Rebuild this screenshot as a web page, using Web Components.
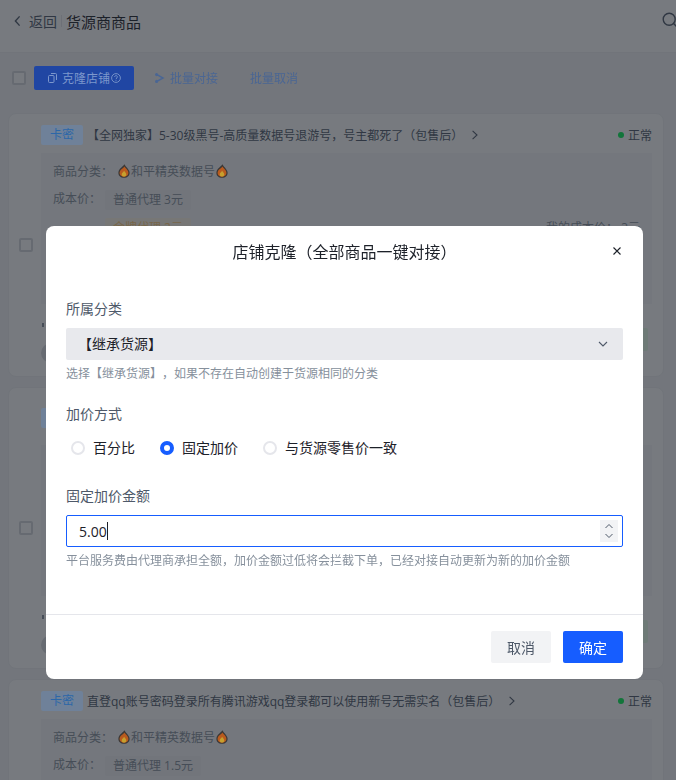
<!DOCTYPE html>
<html lang="zh-CN">
<head>
<meta charset="utf-8">
<title>货源商商品</title>
<style>
    html, body {
        margin: 0;
        height: 780px;
        overflow: hidden;
    }
    body {
        font-family: "Open Sans", "Noto Sans CJK SC", sans-serif;
        font-size: 12px;
        text-spacing-trim: space-all;
        color: #1d2129;
        background: #f4f5f7;
    }
    .page {
        width: 676px;
        height: 780px;
        overflow: hidden;
    }
</style>
</head>
<body>
<div class="page">
    <page-header back="返回" title="货源商商品"></page-header>
    <page-toolbar></page-toolbar>
    <goods-list>
        <goods-card kind="卡密" status="正常" name="【全网独家】5-30级黑号-高质量数据号退游号，号主都死了（包售后）" category="和平精英数据号" cost="普通代理 3元" second="金牌代理 2元" mine="我的成本价： 3元"></goods-card>
        <goods-card tall></goods-card>
        <goods-card kind="卡密" status="正常" name="直登qq账号密码登录所有腾讯游戏qq登录都可以使用新号无需实名（包售后）" category="和平精英数据号" cost="普通代理 1.5元"></goods-card>
    </goods-list>
</div>

<clone-dialog>
    <form-field label="所属分类" hint="选择【继承货源】，如果不存在自动创建于货源相同的分类">
        <select-box value="【继承货源】"></select-box>
    </form-field>
    <form-field label="加价方式">
        <radio-row>
            <radio-option label="百分比"></radio-option>
            <radio-option label="固定加价" checked></radio-option>
            <radio-option label="与货源零售价一致"></radio-option>
        </radio-row>
    </form-field>
    <form-field label="固定加价金额" hint="平台服务费由代理商承担全额，加价金额过低将会拦截下单，已经对接自动更新为新的加价金额">
        <number-box value="5.00"></number-box>
    </form-field>
</clone-dialog>

<script>
// the flames keep their colour through the mask, so they sit above it
const flame = `
    <svg class="flame" width="12" height="14" viewBox="0 0 12 14">
        <path d="M6.4 0.3C7 1.8 8.6 3 9.8 4.8C11 6.4 11.7 7.8 11.6 9.2C11.4 12 9 13.8 6 13.8C3 13.8 0.6 12 0.4 9.2C0.3 7.6 1 6 2 4.8C3.4 3.2 5.4 2.2 6.4 0.3Z" fill="#3b3836"/>
        <path d="M6.4 2.4C7 3.4 8.2 4.4 9 5.6C9.9 6.9 10.5 8 10.4 9.3C10.2 11.4 8.4 12.8 6 12.8C3.6 12.8 1.8 11.4 1.6 9.3C1.5 8 2 6.8 2.9 5.7C3.9 4.6 5.6 3.8 6.4 2.4Z" fill="#b85a1e"/>
        <path d="M6.1 6.8C6.6 8 8.3 8.8 8.3 10.4C8.3 11.7 7.3 12.6 6 12.6C4.7 12.6 3.7 11.7 3.7 10.4C3.7 8.9 5.5 8.2 6.1 6.8Z" fill="#c6a02e"/>
    </svg>`;

class PageHeader extends HTMLElement {
    connectedCallback() {
        this.attachShadow({ mode: 'open' });
        this.shadowRoot.innerHTML = `
            <style>
                :host {
                    display: flex;
                    align-items: center;
                    height: 53px;
                    box-sizing: border-box;
                    padding: 0 0 10px 13px;
                    background: #fff;
                    border-bottom: 1px solid #f0f1f3;
                    font-size: 14px;
                    color: #4e5969;
                }
                .back {
                    display: block;
                    margin-right: 6px;
                }
                .line {
                    width: 1px;
                    height: 12px;
                    margin: 0 4px;
                    background: #e5e6eb;
                }
                .title {
                    font-size: 15px;
                    color: #1d2129;
                }
                .search {
                    margin: 0 -2px 2px auto;
                }
            </style>
            <svg class="back" width="10" height="12" viewBox="0 0 10 12" fill="none" stroke="#4e5969" stroke-width="1.4"><path d="M6.6 1.4L2.4 6L6.6 10.6"/></svg>
            <span>${this.getAttribute('back')}</span>
            <span class="line"></span>
            <span class="title">${this.getAttribute('title')}</span>
            <svg class="search" width="16" height="16" viewBox="0 0 16 16" fill="none" stroke="#4e5969" stroke-width="1.4"><circle cx="7.2" cy="7.2" r="6"/><path d="M11.6 11.6L15 15"/></svg>
        `;
    }
}

class PageToolbar extends HTMLElement {
    connectedCallback() {
        this.attachShadow({ mode: 'open' });
        this.shadowRoot.innerHTML = `
            <style>
                :host {
                    display: flex;
                    align-items: center;
                    height: 24px;
                    padding: 13px 0 23px 12px;
                    font-size: 12px;
                }
                .check {
                    width: 14px;
                    height: 14px;
                    box-sizing: border-box;
                    border: 2px solid #d5d8dd;
                    border-radius: 2px;
                    background: #fff;
                    margin-right: 8px;
                }
                .clone {
                    position: relative;
                    z-index: 1001;
                    display: flex;
                    align-items: center;
                    width: 100px;
                    height: 24px;
                    box-sizing: border-box;
                    padding-left: 14px;
                    border-radius: 2px;
                    background: #2046a3;
                    color: #7c97cc;
                }
                .clone svg:first-child {
                    margin-right: 5px;
                }
                .clone svg:last-child {
                    margin-left: 1px;
                }
                .plain {
                    position: relative;
                    z-index: 1001;
                    display: flex;
                    align-items: center;
                    color: #4a6694;
                }
                .join {
                    margin-left: 21px;
                }
                .join svg {
                    margin-right: 5px;
                }
                .cancel {
                    margin-left: 32px;
                }
            </style>
            <span class="check"></span>
            <span class="clone">
                <svg width="9" height="10" viewBox="0 0 9 10" fill="none" stroke="#7c97cc" stroke-width="1"><rect x="0.5" y="2.5" width="5.5" height="7" rx="1"/><path d="M3 0.5H7.5A1 1 0 0 1 8.5 1.5V7"/></svg>
                <span>克隆店铺</span>
                <svg width="10" height="10" viewBox="0 0 10 10" fill="none" stroke="#7c97cc" stroke-width="0.9"><circle cx="5" cy="5" r="4.4"/><path d="M3.6 4C3.6 2.2 6.4 2.2 6.4 3.9C6.4 5 5 5 5 6.2M5 7V7.8"/></svg>
            </span>
            <span class="plain join">
                <svg width="10" height="10" viewBox="0 0 10 10" fill="none" stroke="#4a6694" stroke-width="1.5"><path d="M2 1.6L8 5L2 8.4"/><circle cx="1.6" cy="1.6" r="0.8" fill="#4a6694"/><circle cx="1.6" cy="8.4" r="0.8" fill="#4a6694"/></svg>
                <span>批量对接</span>
            </span>
            <span class="plain cancel">批量取消</span>
        `;
    }
}

class GoodsList extends HTMLElement {
    connectedCallback() {
        this.attachShadow({ mode: 'open' });
        this.shadowRoot.innerHTML = `
            <style>
                :host {
                    display: flex;
                    flex-direction: column;
                    gap: 10px;
                    padding: 0 12px 0 8px;
                }
            </style>
            <slot></slot>
        `;
    }
}

class GoodsCard extends HTMLElement {
    connectedCallback() {
        this.attachShadow({ mode: 'open' });
        const name = this.getAttribute('name');
        const kind = this.getAttribute('kind') || '';
        const status = this.getAttribute('status');
        const category = this.getAttribute('category');
        const cost = this.getAttribute('cost');
        const second = this.getAttribute('second');
        const mine = this.getAttribute('mine');
        const tall = this.hasAttribute('tall');

        this.shadowRoot.innerHTML = `
            <style>
                :host {
                    display: flex;
                    align-items: center;
                    gap: 8px;
                    box-sizing: border-box;
                    padding: 11px 11px 12px 10px;
                    border: 1px solid #f0f1f3;
                    border-radius: 8px;
                    background: #fff;
                }
                .check {
                    flex: none;
                    width: 14px;
                    height: 14px;
                    box-sizing: border-box;
                    border: 2px solid #d5d8dd;
                    border-radius: 2px;
                }
                .main {
                    flex: 1;
                    min-width: 0;
                }
                .head {
                    display: flex;
                    align-items: center;
                    height: ${tall ? 38 : 20}px;
                    color: #4e5969;
                }
                .kind {
                    position: relative;
                    z-index: 1001;
                    width: 42px;
                    height: 20px;
                    line-height: 20px;
                    text-align: center;
                    border-radius: 2px;
                    background: #6f8199;
                    color: #2c67a8;
                    margin-right: 4px;
                }
                .more {
                    margin-left: 8px;
                }
                .status {
                    margin-left: auto;
                    display: flex;
                    align-items: center;
                    gap: 4px;
                    color: #4e5969;
                }
                .dot {
                    position: relative;
                    z-index: 1001;
                    width: 6px;
                    height: 6px;
                    border-radius: 50%;
                    background: #12753a;
                }
                .box {
                    position: relative;
                    box-sizing: border-box;
                    height: 151px;
                    margin-top: 8px;
                    padding: 8px 12px;
                    background: #f7f8fa;
                    color: #86909c;
                }
                .row {
                    display: flex;
                    align-items: center;
                    height: 20px;
                    white-space: nowrap;
                }
                .row + .row {
                    margin-top: 9px;
                    align-items: flex-start;
                }
                .label {
                    width: 60px;
                    margin-right: 4px;
                }
                .cost .label {
                    width: 52px;
                    margin-right: 0;
                    line-height: 18px;
                }
                .value {
                    display: flex;
                    align-items: center;
                }
                .flame {
                    position: relative;
                    z-index: 1001;
                    display: block;
                    margin: 0 1px;
                }
                .tags {
                    display: flex;
                    flex-direction: column;
                    gap: 8px;
                    align-items: flex-start;
                }
                .price {
                    height: 20px;
                    line-height: 20px;
                    padding: 0 8px;
                    border-radius: 2px;
                    background: #f2f3f5;
                }
                .price.gold {
                    background: #fff7e8;
                    color: #ffce7a;
                }
                .mine {
                    position: absolute;
                    right: 12px;
                    top: 65px;
                }
                .foot {
                    display: flex;
                    justify-content: space-between;
                    height: 60px;
                }
                .mark {
                    width: 2px;
                    height: 4px;
                    margin-top: 19px;
                    background: #86909c;
                    margin-left: 1px;
                }
                .avatar {
                    width: 20px;
                    height: 20px;
                    margin-top: 16px;
                    border-radius: 50%;
                    background: #d8dadf;
                }
                .confirm {
                    width: 60px;
                    height: 23px;
                    margin: 24px 4px 0 0;
                    border-radius: 2px;
                    background: #e8ffea;
                }
            </style>
            <span class="check"></span>
            <div class="main">
                <div class="head">
                    <span class="kind">${kind}</span>
                    ${name ? `<span>${name}</span>
                    <svg class="more" width="8" height="10" viewBox="0 0 8 10" fill="none" stroke="#4e5969" stroke-width="1.1"><path d="M1.6 0.8L6 5L1.6 9.2"/></svg>` : ''}
                    ${status ? `<span class="status"><span class="dot"></span>${status}</span>` : ''}
                </div>
                <div class="box">
                    ${category ? `<div class="row"><span class="label">商品分类：</span><span class="value">${flame}${category}${flame}</span></div>` : ''}
                    ${cost ? `<div class="row cost"><span class="label">成本价：</span><div class="tags"><span class="price">${cost}</span>${second ? `<span class="price gold">${second}</span>` : ''}</div></div>` : ''}
                    ${mine ? `<span class="mine">${mine}</span>` : ''}
                </div>
                <div class="foot">
                    <div>
                        <div class="mark"></div>
                        <div class="avatar"></div>
                    </div>
                    <div class="confirm"></div>
                </div>
            </div>
        `;
    }
}

class CloneDialog extends HTMLElement {
    connectedCallback() {
        this.attachShadow({ mode: 'open' });
        this.shadowRoot.innerHTML = `
            <style>
                :host {
                    display: block;
                }
                .mask {
                    position: fixed;
                    inset: 0;
                    z-index: 1000;
                    background: rgba(29, 33, 41, 0.6);
                }
                .dialog {
                    position: fixed;
                    left: 46px;
                    top: 226px;
                    z-index: 1002;
                    display: flex;
                    flex-direction: column;
                    width: 597px;
                    height: 453px;
                    border-radius: 8px;
                    background: #fff;
                    color: #1d2129;
                }
                .title {
                    position: relative;
                    height: 52px;
                    line-height: 52px;
                    text-align: center;
                    font-size: 16px;
                }
                .close {
                    position: absolute;
                    right: 21px;
                    top: 20px;
                }
                .body {
                    flex: 1;
                    display: flex;
                    flex-direction: column;
                    gap: 22px;
                    padding: 21px 20px 0;
                }
                .foot {
                    display: flex;
                    justify-content: flex-end;
                    gap: 12px;
                    padding: 16px 20px;
                    border-top: 1px solid #e5e6eb;
                }
                button {
                    width: 60px;
                    height: 32px;
                    padding: 0 0 1px;
                    border: 0;
                    border-radius: 2px;
                    font: inherit;
                    font-size: 14px;
                    background: #f2f3f5;
                    color: #4e5969;
                }
                button.primary {
                    background: #165dff;
                    color: #fff;
                }
            </style>
            <div class="mask"></div>
            <div class="dialog">
                <div class="title">
                    店铺克隆（全部商品一键对接）
                    <svg class="close" width="10" height="10" viewBox="0 0 10 10" fill="none" stroke="#1d2129" stroke-width="1.1"><path d="M1.5 1.5L8.5 8.5M8.5 1.5L1.5 8.5"/></svg>
                </div>
                <div class="body"><slot></slot></div>
                <div class="foot">
                    <button>取消</button>
                    <button class="primary">确定</button>
                </div>
            </div>
        `;
    }
}

class FormField extends HTMLElement {
    connectedCallback() {
        this.attachShadow({ mode: 'open' });
        const hint = this.getAttribute('hint');
        this.shadowRoot.innerHTML = `
            <style>
                :host {
                    display: block;
                }
                .label {
                    height: 20px;
                    line-height: 20px;
                    margin-bottom: 9px;
                    font-size: 14px;
                    color: #4e5969;
                }
                .hint {
                    height: 17px;
                    line-height: 18px;
                    margin-top: 5px;
                    font-size: 12px;
                    color: #86909c;
                }
            </style>
            <div class="label">${this.getAttribute('label')}</div>
            <slot></slot>
            ${hint ? `<div class="hint">${hint}</div>` : ''}
        `;
    }
}

class SelectBox extends HTMLElement {
    connectedCallback() {
        this.attachShadow({ mode: 'open' });
        this.shadowRoot.innerHTML = `
            <style>
                :host {
                    display: flex;
                    align-items: center;
                    justify-content: space-between;
                    height: 32px;
                    padding: 0 14px 0 12px;
                    border-radius: 2px;
                    background: #e8e9ed;
                    font-size: 14px;
                    color: #1d2129;
                }
                span {
                    padding-bottom: 2px;
                }
            </style>
            <span>${this.getAttribute('value')}</span>
            <svg width="12" height="12" viewBox="0 0 12 12" fill="none" stroke="#4e5969" stroke-width="1.1"><path d="M2 4L6 8L10 4"/></svg>
        `;
    }
}

class RadioRow extends HTMLElement {
    connectedCallback() {
        this.attachShadow({ mode: 'open' });
        this.shadowRoot.innerHTML = `
            <style>
                :host {
                    display: flex;
                    align-items: center;
                    gap: 25px;
                    height: 32px;
                    margin-top: -1px;
                    padding-left: 5px;
                }
            </style>
            <slot></slot>
        `;
    }
}

class RadioOption extends HTMLElement {
    connectedCallback() {
        this.attachShadow({ mode: 'open' });
        this.shadowRoot.innerHTML = `
            <style>
                :host {
                    display: flex;
                    align-items: center;
                    gap: 8px;
                    font-size: 14px;
                    color: #1d2129;
                }
                .dot {
                    width: 14px;
                    height: 14px;
                    box-sizing: border-box;
                    border: 2px solid #e5e6eb;
                    border-radius: 50%;
                }
                :host([checked]) .dot {
                    border: 4px solid #165dff;
                }
                .text {
                    padding-bottom: 2px;
                }
            </style>
            <span class="dot"></span>
            <span class="text">${this.getAttribute('label')}</span>
        `;
    }
}

class NumberBox extends HTMLElement {
    connectedCallback() {
        this.attachShadow({ mode: 'open' });
        this.shadowRoot.innerHTML = `
            <style>
                :host {
                    display: flex;
                    align-items: center;
                    justify-content: space-between;
                    height: 32px;
                    box-sizing: border-box;
                    padding: 0 4px 0 12px;
                    border: 1px solid #165dff;
                    border-radius: 2px;
                    font-size: 14px;
                    color: #1d2129;
                }
                .value {
                    display: flex;
                    align-items: center;
                }
                .caret {
                    width: 1px;
                    height: 18px;
                    background: #1d2129;
                }
                .step {
                    display: flex;
                    flex-direction: column;
                    align-items: center;
                    justify-content: space-between;
                    box-sizing: border-box;
                    width: 18px;
                    height: 22px;
                    padding: 3px 0;
                    background: #f2f3f5;
                }
                svg {
                    display: block;
                }
            </style>
            <span class="value">${this.getAttribute('value')}<span class="caret"></span></span>
            <span class="step">
                <svg width="10" height="6" viewBox="0 0 10 6" fill="none" stroke="#4e5969" stroke-width="1"><path d="M1.5 5L5 1.5L8.5 5"/></svg>
                <svg width="10" height="6" viewBox="0 0 10 6" fill="none" stroke="#4e5969" stroke-width="1"><path d="M1.5 1L5 4.5L8.5 1"/></svg>
            </span>
        `;
    }
}

customElements.define('page-header', PageHeader);
customElements.define('page-toolbar', PageToolbar);
customElements.define('goods-list', GoodsList);
customElements.define('goods-card', GoodsCard);
customElements.define('clone-dialog', CloneDialog);
customElements.define('form-field', FormField);
customElements.define('select-box', SelectBox);
customElements.define('radio-row', RadioRow);
customElements.define('radio-option', RadioOption);
customElements.define('number-box', NumberBox);
</script>
</body>
</html>
